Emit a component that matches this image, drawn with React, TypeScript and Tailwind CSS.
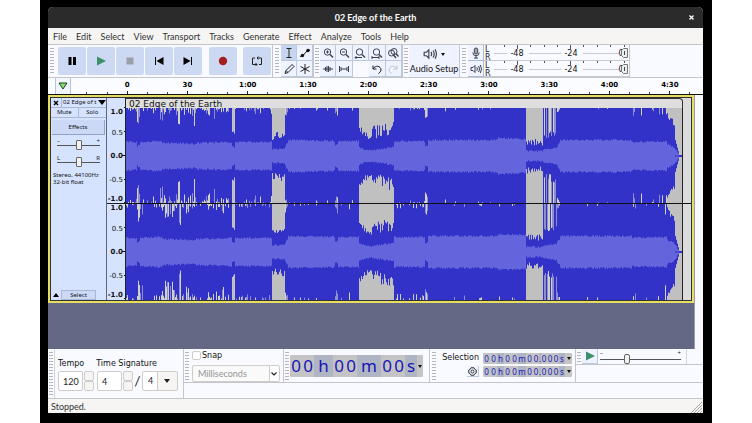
import type { ReactNode } from "react";

type Segment = {
	to: number;
	peak: [number, number];
	jitter: number;
	rms: [number, number];
	gapChance: number;
	gapDepth: number;
	wide?: boolean;
};

// Envelope of the clip. x runs along the clip, levels are in px out of 48.
const SEGMENTS: Segment[] = [
	{ to: 11, peak: [48, 48], jitter: 0, rms: [14, 14], gapChance: 0.4, gapDepth: 8 },
	{ to: 14, peak: [42, 34], jitter: 8, rms: [10, 11], gapChance: 0.8, gapDepth: 12 },
	{ to: 36, peak: [48, 48], jitter: 0, rms: [14, 15], gapChance: 0.35, gapDepth: 12 },
	{ to: 70, peak: [48, 48], jitter: 0, rms: [13, 12], gapChance: 0.75, gapDepth: 24 },
	{ to: 106, peak: [48, 48], jitter: 0, rms: [13, 14], gapChance: 0.5, gapDepth: 12 },
	{ to: 109, peak: [24, 21], jitter: 3, rms: [10, 8], gapChance: 0, gapDepth: 0, wide: true },
	{ to: 146, peak: [48, 48], jitter: 0, rms: [14, 14], gapChance: 0.35, gapDepth: 6 },
	{ to: 159, peak: [19, 22], jitter: 8, rms: [7, 7], gapChance: 0, gapDepth: 0, wide: true },
	{ to: 162, peak: [42, 46], jitter: 6, rms: [10, 15], gapChance: 0, gapDepth: 0 },
	{ to: 209, peak: [48, 48], jitter: 0, rms: [16, 15], gapChance: 0.12, gapDepth: 4 },
	{ to: 212, peak: [43, 43], jitter: 6, rms: [11, 12], gapChance: 0.4, gapDepth: 8 },
	{ to: 233, peak: [48, 48], jitter: 0, rms: [15, 15], gapChance: 0.1, gapDepth: 5 },
	{ to: 246, peak: [27, 17], jitter: 6, rms: [8, 5], gapChance: 0, gapDepth: 0, wide: true },
	{ to: 268, peak: [24, 28], jitter: 14, rms: [6, 9], gapChance: 0, gapDepth: 0, wide: true },
	{ to: 299, peak: [48, 48], jitter: 0, rms: [15, 15], gapChance: 0.3, gapDepth: 6 },
	{ to: 302, peak: [38, 40], jitter: 5, rms: [9, 11], gapChance: 0, gapDepth: 0 },
	{ to: 372, peak: [48, 48], jitter: 0, rms: [16, 16], gapChance: 0.12, gapDepth: 3 },
	{ to: 400, peak: [48, 48], jitter: 0, rms: [18, 17], gapChance: 0.05, gapDepth: 3 },
	{ to: 417, peak: [14, 14], jitter: 7, rms: [5, 5], gapChance: 0, gapDepth: 0, wide: true },
	{ to: 431, peak: [20, 24], jitter: 8, rms: [6, 8], gapChance: 0, gapDepth: 0 },
	{ to: 434, peak: [42, 46], jitter: 4, rms: [10, 14], gapChance: 0, gapDepth: 0 },
	{ to: 506, peak: [48, 48], jitter: 0, rms: [16, 16], gapChance: 0.08, gapDepth: 3 },
	{ to: 541, peak: [48, 48], jitter: 0, rms: [14, 15], gapChance: 0.15, gapDepth: 12 },
	{ to: 549, peak: [42, 30], jitter: 6, rms: [12, 8], gapChance: 0, gapDepth: 0, wide: true },
	{ to: 553, peak: [16, 1], jitter: 0, rms: [7, 1], gapChance: 0, gapDepth: 0, wide: true },
	{ to: 557, peak: [1, 1], jitter: 0, rms: [0, 0], gapChance: 0, gapDepth: 0, wide: true },
];

function makeRandom(seed: number) {
	let s = seed;
	return () => {
		s = (s * 16807) % 2147483647;
		return s / 2147483647;
	};
}

function buildChannel(mid: number, seed: number) {
	const rand = makeRandom(seed);
	const out = { wide: "", cream: "", pale: "", rms: "" };
	let from = 0;
	SEGMENTS.forEach(seg => {
		for (let x = from; x < seg.to; x++) {
			const t = (x - from) / (seg.to - from);
			const level = seg.peak[0] + (seg.peak[1] - seg.peak[0]) * t;
			const rms = seg.rms[0] + (seg.rms[1] - seg.rms[0]) * t;
			let up = level + (rand() - 0.5) * seg.jitter;
			let down = level + (rand() - 0.5) * seg.jitter;
			if (rand() < seg.gapChance) {
				const depth = rand() * rand() * seg.gapDepth + 1;
				up -= depth;
				down -= depth * 1.4;
			}
			// the broken-up passage before 3:30 reaches full scale on some columns
			if (seg.to === 431 && rand() < 0.4) {
				up = 48;
				down = 48;
			}
			const kind = seg.wide ? "wide" : rand() < 0.4 ? "pale" : "cream";
			const u = Math.max(0.5, Math.min(48, up));
			const d = Math.max(0.5, Math.min(48, down));
			if (u < 48) out[kind] += `M${x} ${mid - 48}h1V${(mid - u).toFixed(1)}h-1z`;
			if (d < 48) out[kind] += `M${x} ${mid + 48}h1V${(mid + d).toFixed(1)}h-1z`;
			if (rms > 0) {
				const r = rms + (rand() - 0.5) * 1.8;
				out.rms += `M${x} ${(mid - r).toFixed(1)}h1v${(r * 2).toFixed(1)}h-1z`;
			}
		}
		from = seg.to;
	});
	return out;
}

const CHANNELS = [buildChannel(48, 4211), buildChannel(144, 977)];

function Grip({ className = "mx-[2px]" }: { className?: string }) {
	return <div className={`w-1 my-[2px] shrink-0 self-stretch bg-[radial-gradient(circle,#b4b6bc_40%,transparent_50%)] bg-size-[2px_3px] ${className}`} />;
}

function Svg({ children, className = "w-3 h-3" }: { children: ReactNode; className?: string }) {
	return (
		<svg viewBox="0 0 12 12" className={className} fill="none" stroke="#3c4050" strokeWidth="1">
			{children}
		</svg>
	);
}

function TransportButton({ label, children, className = "" }: { label: string; children: ReactNode; className?: string }) {
	return (
		<button type="button" aria-label={label} className={`w-7 h-7 rounded-[2px] bg-[#cdd9f2] flex items-center justify-center ${className}`}>
			<Svg>{children}</Svg>
		</button>
	);
}

function ToolButton({ label, children, className = "bg-[#eef3ff]" }: { label: string; children: ReactNode; className?: string }) {
	return (
		<button type="button" aria-label={label} className={`h-4 border-r border-b border-[#bcc8de] flex items-center justify-center ${className}`}>
			<Svg>{children}</Svg>
		</button>
	);
}

const LENS = (
	<>
		<circle cx="5.5" cy="5" r="3.2" />
		<path d="M8 7.5l3 3" strokeWidth="1.4" />
	</>
);

const SPEAKER = (
	<>
		<path d="M1 4.5h2l2-2v7l-2-2H1z" />
		<path d="M6.8 4.2q1.2 1.8 0 3.6M8.6 3q2 3 0 6M10.3 2q2.4 4 0 8" />
	</>
);

const MIC = (
	<>
		<rect x="4.3" y="1" width="3.4" height="6" rx="1.7" fill="#a0a4ac" />
		<path d="M2.8 5.5q0 3.2 3.2 3.2t3.2-3.2M6 8.7v2.5M4 11h4" />
	</>
);

const METER_TICKS = [14, 27, 40, 54, 67, 80, 93, 107, 120, 134];

function Meter({ label, icon }: { label: string; icon: ReactNode }) {
	return (
		<div className="flex h-4 border-b border-[#c8cad0]">
			<button type="button" aria-label={label} className="w-4 h-4 bg-[#eef3ff] border-r border-b border-[#a9bcdc] flex items-center justify-center">
				<Svg>{icon}</Svg>
			</button>
			<div className="w-[7px] pl-px pt-px text-[8px] leading-[8px] font-['DejaVu_Sans',sans-serif] text-[#222]">
				<div>L</div>
				<div>R</div>
			</div>
			<svg viewBox="0 0 138 16" className="w-[138px] h-4 font-['DejaVu_Sans',sans-serif]" role="img" aria-label={`${label} level`}>
				<path d="M3 8.500H16M38 8.500H70M92 8.500H128" stroke="#c9cbd2" />
				{METER_TICKS.map((x, i) => (
					<path key={x} d={`M${x - 0.5} 0v${i === 1 || i === 5 ? 4 : 2}`} stroke="#555" />
				))}
				<text x="26" y="11" fontSize="8" textAnchor="middle" fill="#111">-48</text>
				<text x="80" y="11" fontSize="8" textAnchor="middle" fill="#111">-24</text>
				<text x="130" y="11" fontSize="8" textAnchor="middle" fill="#111">0</text>
				<path d="M130.500 5.500l2-2h4v9h-4l-2-2z" fill="#eee" stroke="#777" />
				<path d="M133.500 6v4" stroke="#444" />
			</svg>
		</div>
	);
}

function Toolbars() {
	return (
		<div className="flex h-[34px] bg-[#f8faff] border-y border-[#c4c6cc] overflow-hidden">
			<Grip />
			<div className="flex items-center pl-[2px] pr-px gap-x-px border-r border-[#c4c6cc]">
				<TransportButton label="Pause">
					<path d="M2.500 2h3v8h-3zM7 2h3v8H7z" fill="#000" stroke="none" />
				</TransportButton>
				<TransportButton label="Play">
					<path d="M2 1.500L11 6 2 10.500z" fill="#3f8f68" stroke="none" />
				</TransportButton>
				<TransportButton label="Stop">
					<path d="M2.500 2.500h7v7h-7z" fill="#9ba0a8" stroke="none" />
				</TransportButton>
				<TransportButton label="Skip to start">
					<path d="M2 2h1v8H2zM10.500 2v8L3.500 6z" fill="#000" stroke="none" />
				</TransportButton>
				<TransportButton label="Skip to end">
					<path d="M9 2h1v8H9zM1.500 2v8l7-4z" fill="#000" stroke="none" />
				</TransportButton>
				<TransportButton label="Record" className="ml-[6px]">
					<circle cx="6" cy="6" r="4.200" fill="#a31f1f" stroke="none" />
				</TransportButton>
				<TransportButton label="Loop" className="ml-[5px]">
					<path d="M4 3H1.500v6.500H6M8 9.500h2.500V3H6M4.500 8L6 9.500 4.500 11M7.500 1.500L6 3l1.500 1.500" stroke="#222" />
				</TransportButton>
			</div>
			<Grip />
			<div className="grid grid-cols-2 w-8">
				<ToolButton label="Selection tool" className="bg-[#c6d4f0]">
					<path d="M3.500 1.500h5M3.500 10.500h5M6 1.500v9" stroke="#222" />
				</ToolButton>
				<ToolButton label="Envelope tool">
					<path d="M1 9.500L4 8.500 8 4l3-1" stroke="#111" />
					<circle cx="3.5" cy="8.500" r="1.700" fill="#111" stroke="none" />
					<circle cx="9" cy="3.500" r="1.700" fill="#111" stroke="none" />
				</ToolButton>
				<ToolButton label="Draw tool">
					<path d="M2 10.500l1-3L9 1.500l2 2-6 6zM3 7.500l2 2" stroke="#222" />
				</ToolButton>
				<ToolButton label="Multi-tool">
					<path d="M6 1v10M1.500 3.500l9 5M10.500 3.500l-9 5" stroke="#222" />
				</ToolButton>
			</div>
			<div className="border-r border-[#c4c6cc]" />
			<Grip className="mx-px" />
			<div className="grid grid-cols-5 w-[82px]">
				<ToolButton label="Zoom in">{LENS}<path d="M4 5h3M5.500 3.500v3" /></ToolButton>
				<ToolButton label="Zoom out">{LENS}<path d="M4 5h3" /></ToolButton>
				<ToolButton label="Fit selection">{LENS}<path d="M1 10.500h7M2.500 9L1 10.500 2.500 12" /></ToolButton>
				<ToolButton label="Fit project">{LENS}<path d="M1 9v3M8 9v3M1 10.500h7" /></ToolButton>
				<ToolButton label="Zoom toggle">
					<circle cx="7" cy="4.500" r="3" />
					<circle cx="4.500" cy="6" r="3" />
					<path d="M9 6.500l2.500 3M6.500 8l2.500 3" strokeWidth="1.400" />
				</ToolButton>
				<ToolButton label="Trim audio">
					<path d="M1 6h10M3.500 4v4M5 3v6M6.500 3v6M8 4v4" />
				</ToolButton>
				<ToolButton label="Silence audio">
					<path d="M1.500 3v6M3 4v4M9 4v4M10.500 3v6M3 6h6" />
				</ToolButton>
				<div />
				<ToolButton label="Undo">
					<path d="M2 2.500v3.500h3.500M2 6C4 2 10 2.500 10 7q0 2-2.500 3.500" stroke="#222" />
				</ToolButton>
				<ToolButton label="Redo">
					<path d="M10 2.500v3.500H6.500M10 6C8 2 2 2.500 2 7q0 2 2.500 3.500" stroke="#c0c4cc" />
				</ToolButton>
			</div>
			<div className="border-r border-[#c4c6cc]" />
			<Grip className="mx-px" />
			<button type="button" className="w-[51px] flex flex-col items-center justify-center gap-y-[2px] bg-[#eef3ff] border-r border-[#bcc8de] font-['Lato',sans-serif] text-[9px] leading-3 text-[#111] whitespace-nowrap">
				<span className="flex items-center gap-x-1">
					<Svg className="w-[14px] h-[14px]">{SPEAKER}</Svg>
					<svg viewBox="0 0 4 3" className="w-1 h-[3px]"><path d="M0 0h4L2 3z" fill="#111" /></svg>
				</span>
				<span>Audio Setup</span>
			</button>
			<Grip />
			<div className="border-r border-[#c4c6cc]">
				<Meter label="Record" icon={MIC} />
				<Meter label="Playback" icon={SPEAKER} />
			</div>
		</div>
	);
}

const TIMES = ["0", "30", "1:00", "1:30", "2:00", "2:30", "3:00", "3:30", "4:00", "4:30"];

function Timeline() {
	return (
		<div className="flex h-[17px] bg-[#fbfcff] border-b border-[#111]">
			<button type="button" aria-label="Timeline options" className="ml-[7px] w-4 bg-[#f0f5ff] border-x border-[#b9c3d6] flex items-center justify-center">
				<svg viewBox="0 0 10 8" className="w-[10px] h-2">
					<path d="M1 1h8L5 7z" fill="#7fe36f" stroke="#243a24" />
				</svg>
			</button>
			<div className="w-[26px] flex pl-[15px] items-end">
				<div className="w-px h-[2px] bg-[#444]" />
			</div>
			<div className="flex-1 mr-[3px] grid grid-cols-10 font-['DejaVu_Sans',sans-serif] font-bold text-[7px] text-black">
				{TIMES.map(t => (
					<div key={t} className="flex flex-col justify-between text-center">
						<div className="h-[13px] leading-[14px]">{t}</div>
						<div className="grid grid-cols-3 items-end justify-items-center">
							<i className="w-px h-[2px] bg-[#444]" />
							<i className="w-px h-[3px] bg-[#222]" />
							<i className="w-px h-[2px] bg-[#444]" />
						</div>
					</div>
				))}
			</div>
		</div>
	);
}

function PanelSlider({ label, left, right }: { label: string; left: string; right: string }) {
	return (
		<label className="relative block h-[17px] mx-[6px] text-[6px] leading-[6px] text-[#222]">
			<span className="flex justify-between"><span>{left}</span><span>{right}</span></span>
			<input
				type="range"
				aria-label={label}
				defaultValue={50}
				className="absolute inset-x-0 top-[2px] h-[10px] w-full appearance-none bg-[linear-gradient(#555,#555)] bg-size-[100%_1px] bg-no-repeat bg-center [&::-webkit-slider-thumb]:appearance-none [&::-webkit-slider-thumb]:w-[6px] [&::-webkit-slider-thumb]:h-[10px] [&::-webkit-slider-thumb]:rounded-[1px] [&::-webkit-slider-thumb]:border [&::-webkit-slider-thumb]:border-[#666] [&::-webkit-slider-thumb]:bg-[#f2f2f2]"
			/>
		</label>
	);
}

function TrackPanel() {
	return (
		<div className="w-14 shrink-0 flex flex-col bg-[#d6e3ff] border-r border-[#5d6678] font-['Noto_Sans',sans-serif] text-[6px] leading-[9px] text-[#111]">
			<div className="flex h-[10px] border-b border-[#a9b7d2] items-center">
				<button type="button" aria-label="Close track" className="w-[11px] h-full border-r border-[#a9b7d2] flex items-center justify-center">
					<svg viewBox="0 0 6 6" className="w-[6px] h-[6px]"><path d="M1 1l4 4M5 1L1 5" stroke="#000" strokeWidth="1.400" /></svg>
				</button>
				<button type="button" className="flex-1 h-full pl-px flex items-center justify-between whitespace-nowrap">
					02 Edge of t
					<svg viewBox="0 0 8 5" className="w-2 h-[5px]"><path d="M0 0h8L4 5z" fill="#000" /></svg>
				</button>
			</div>
			<div className="grid grid-cols-2 h-[10px] border-b border-[#a9b7d2]">
				<button type="button" className="border-r border-[#a9b7d2]">Mute</button>
				<button type="button">Solo</button>
			</div>
			<button type="button" className="h-[15px] mt-[2px] mx-px border-r border-b border-[#92a2c4] bg-[#cbd9f7]">Effects</button>
			<div className="mt-[3px]">
				<PanelSlider label="Gain" left="–" right="+" />
				<PanelSlider label="Pan" left="L" right="R" />
			</div>
			<div className="pl-[2px] leading-[7px] whitespace-nowrap">
				<div>Stereo, 44100Hz</div>
				<div>32-bit float</div>
			</div>
			<div className="mt-auto flex h-[10px]">
				<button type="button" aria-label="Collapse" className="w-[11px] border-r border-[#a9b7d2] flex items-center justify-center">
					<svg viewBox="0 0 6 4" className="w-[6px] h-1"><path d="M0 4h6L3 0z" fill="#000" /></svg>
				</button>
				<button type="button" className="w-[34px] border-r border-b border-t border-[#a9b7d2] bg-[#cbd9f7] leading-[8px]">Select</button>
			</div>
		</div>
	);
}

const LEVELS = [
	{ text: "1.0", y: 6, tick: 0 },
	{ text: "0.5", y: 27, tick: 24 },
	{ text: "0.0", y: 50, tick: 48 },
	{ text: "-0.5", y: 74, tick: 72 },
	{ text: "-1.0", y: 93, tick: 95 },
];

function LevelRuler() {
	return (
		<svg viewBox="0 0 19 202" className="w-[19px] h-[202px] shrink-0 bg-[#d6e3ff] font-['DejaVu_Sans',sans-serif]">
			{[10, 106].map(top => (
				<g key={top}>
					{LEVELS.map(l => (
						<g key={l.text}>
							<text x="16" y={top + l.y} fontSize="7" textAnchor="end" fontWeight={l.text.endsWith("5") ? 400 : 700} fill="#111">
								{l.text}
							</text>
							<path d={`M${l.text === "0.0" ? 15 : 17} ${top + l.tick - 0.5}h4`} stroke="#111" />
						</g>
					))}
				</g>
			))}
			<path d="M0 105.500h19M18.500 0v202" stroke="#222" />
		</svg>
	);
}

function Clip() {
	return (
		<div className="flex-1 min-w-0 bg-[#dcdcdc]">
			<div className="h-[10px] mr-2 pl-[3px] border-t border-r border-[#333] rounded-tr-[4px] bg-[#dedede] font-['DejaVu_Sans',sans-serif] text-[9px] leading-[10px] text-[#111]">
				02 Edge of the Earth
			</div>
			<svg viewBox="0 0 565 192" preserveAspectRatio="none" className="block w-full h-[192px]" role="img" aria-label="Stereo waveform">
				<rect width="557" height="192" fill="#3232c8" />
				{CHANNELS.map((c, i) => (
					<g key={i}>
						<path d={c.wide} fill="#c0c0c0" />
						<path d={c.cream} fill="#d2d2c4" />
						<path d={c.pale} fill="#8e8ecc" />
						<path d={c.rms} fill="#6464dc" />
					</g>
				))}
				<path d="M0 95.500H565" stroke="#111" />
				<path d="M549 48H557M549 144H557" stroke="#3232c8" />
				<path d="M556.500 0v192" stroke="#222" />
			</svg>
		</div>
	);
}

function Field({ label, value, width }: { label: string; value: string; width: string }) {
	return (
		<div className="flex">
			<input
				aria-label={label}
				defaultValue={value}
				className={`${width} h-5 pl-1 rounded-[2px] border border-[#cfcdca] bg-white text-[9px] text-[#222]`}
			/>
			<div className="flex flex-col ml-px w-[10px]">
				<button type="button" aria-label={`${label} up`} className="h-[10px] rounded-[2px] border border-[#cfcdca] bg-[#f6f5f4]" />
				<button type="button" aria-label={`${label} down`} className="h-[10px] rounded-[2px] border border-[#cfcdca] bg-[#f6f5f4]" />
			</div>
		</div>
	);
}

function TempoBar() {
	return (
		<div className="flex h-[50px] border-r border-b border-[#c4c6cc]">
			<Grip className="mx-px" />
			<div className="flex flex-col border-l border-[#d4d6dc] pl-[3px] pr-[5px]">
				<div className="flex mt-2 gap-x-3 font-['DejaVu_Sans',sans-serif] text-[8px] leading-[13px] text-[#111] whitespace-nowrap">
					<span>Tempo</span>
					<span>Time Signature</span>
				</div>
				<div className="flex items-center mt-px font-['Lato',sans-serif]">
					<Field label="Tempo" value="120" width="w-[25px]" />
					<div className="w-[3px]" />
					<Field label="Upper time signature" value="4" width="w-[25px]" />
					<span className="w-[9px] text-center text-[14px] leading-5 text-[#222]">/</span>
					<div className="relative">
						<select aria-label="Lower time signature" className="block appearance-none w-9 h-5 pl-[5px] rounded-[2px] border border-[#cfcdca] bg-[linear-gradient(90deg,#fff_14px,#cfcdca_14px,#cfcdca_15px,#f6f5f4_15px)] text-[9px] text-[#222]">
							<option>4</option>
							<option>8</option>
						</select>
						<svg viewBox="0 0 6 4" className="absolute right-2 top-2 w-[6px] h-1 pointer-events-none"><path d="M0 0h6L3 4z" fill="#222" /></svg>
					</div>
				</div>
			</div>
		</div>
	);
}

function SnapBar() {
	return (
		<div className="flex h-[33px] border-r border-[#c4c6cc]">
			<Grip className="mx-px" />
			<div className="pl-[2px] pr-[3px] flex flex-col">
				<label className="flex items-center gap-x-px h-[13px] font-['DejaVu_Sans',sans-serif] text-[8px] leading-[13px] text-[#111]">
					<input type="checkbox" className="appearance-none w-[9px] h-[9px] rounded-[2px] border border-[#cfcdca] bg-white" />
					Snap
				</label>
				<div className="relative mt-[3px]">
					<select aria-label="Snap to" disabled className="block appearance-none w-[88px] h-[17px] pl-[5px] rounded-[2px] border border-[#cfcdca] bg-[linear-gradient(90deg,#fafafa_76px,#cfcdca_76px,#cfcdca_77px,#fff_77px)] font-['Lato',sans-serif] text-[9px] text-[#929595] opacity-100">
						<option>Milliseconds</option>
					</select>
					<svg viewBox="0 0 6 4" className="absolute right-[3px] top-[7px] w-[6px] h-1 pointer-events-none"><path d="M0.500 0.500L3 3 5.500 0.500" fill="none" stroke="#222" strokeWidth="1.200" /></svg>
				</div>
			</div>
		</div>
	);
}

const BIG_CELLS = [
	["0", "w-3"], ["0", "w-3"], ["h", "w-[19px]"],
	["0", "w-3"], ["0", "w-3"], ["m", "w-[24px]"],
	["0", "w-3"], ["0", "w-3"], ["s", "w-3"],
];

const SMALL_CELLS = [
	["0", "w-[7px]"], ["0", "w-[7px]"], ["h", "w-[7px]"],
	["0", "w-[7px]"], ["0", "w-[7px]"], ["m", "w-2"],
	["0", "w-[7px]"], ["0", "w-[6px]"], [".", "w-[2px]"],
	["0", "w-[6px]"], ["0", "w-[6px]"], ["0", "w-[6px]"], ["s", "w-[6px]"],
];

function TimeDisplay({ label, cells, className }: { label: string; cells: string[][]; className: string }) {
	return (
		<div role="group" aria-label={label} className={`flex rounded-[2px] bg-[#b0b5c4] overflow-hidden font-['Noto_Sans',sans-serif] text-[#1616b8] ${className}`}>
			{cells.map(([char, width], i) => (
				<span key={i} className={`${width} flex justify-center ${char === "0" ? "bg-[#c4c4c4]" : ""}`}>{char}</span>
			))}
			<button type="button" aria-label={`${label} format`} className="flex-1 flex items-center justify-center bg-[#c4c4c4]">
				<svg viewBox="0 0 4 3" className="w-1 h-[3px]"><path d="M0 0h4L2 3z" fill="#111" /></svg>
			</button>
		</div>
	);
}

function BottomBars() {
	return (
		<div className="flex items-start h-[50px] bg-[#f8faff] border-b border-[#c4c6cc] overflow-hidden">
			<TempoBar />
			<div className="flex-1 flex items-start border-b border-[#c4c6cc] h-[34px]">
				<SnapBar />
				<div className="flex h-[33px] border-r border-[#c4c6cc]">
					<Grip className="mx-px" />
					<TimeDisplay label="Time" cells={BIG_CELLS} className="w-[133px] h-[22px] mt-[6px] mr-[6px] text-[17px] leading-[22px]" />
				</div>
				<div className="flex h-[33px] border-r border-[#c4c6cc]">
					<Grip />
					<div className="w-[45px] flex flex-col items-end pr-1 font-['DejaVu_Sans',sans-serif] text-[8px] text-[#111]">
						<div className="h-[17px] leading-[17px]">Selection</div>
						<button type="button" aria-label="Selection settings" className="w-3 h-[11px] bg-[#f0f4ff] border-r border-b border-[#bcc8de] flex items-center justify-center">
							<svg viewBox="0 0 12 12" className="w-[9px] h-[9px]" fill="none" stroke="#333" strokeWidth="1.300">
								<path d="M4 1h4l1 2 2 1v4l-2 1-1 2H4L3 9 1 8V4l2-1z" />
								<circle cx="6" cy="6" r="2" />
							</svg>
						</button>
					</div>
					<div className="flex flex-col gap-y-[2px] mt-1 mr-[3px]">
						<TimeDisplay label="Selection start" cells={SMALL_CELLS} className="w-[89px] h-[11px] text-[8px] leading-[11px]" />
						<TimeDisplay label="Selection end" cells={SMALL_CELLS} className="w-[89px] h-[11px] text-[8px] leading-[11px]" />
					</div>
				</div>
				<div className="flex-1 flex h-4 border-b border-[#c4c6cc]">
					<Grip className="mx-px" />
					<button type="button" aria-label="Play at speed" className="w-4 bg-[#eef3ff] border-r border-b border-[#bcc8de] flex items-center justify-center">
						<Svg><path d="M2 1.500L11 6 2 10.500z" fill="#3f8f68" stroke="none" /></Svg>
					</button>
					<label className="relative w-[81px] ml-[2px] text-[6px] leading-[8px] text-[#222]">
						<span className="flex justify-between"><span>–</span><span>+</span></span>
						<input
							type="range"
							aria-label="Playback speed"
							defaultValue={32}
							className="absolute inset-x-0 top-[5px] h-[10px] w-full appearance-none bg-[linear-gradient(#555,#555)] bg-size-[100%_1px] bg-no-repeat bg-center [&::-webkit-slider-thumb]:appearance-none [&::-webkit-slider-thumb]:w-[6px] [&::-webkit-slider-thumb]:h-[10px] [&::-webkit-slider-thumb]:rounded-[2px] [&::-webkit-slider-thumb]:border [&::-webkit-slider-thumb]:border-[#666] [&::-webkit-slider-thumb]:bg-[#f2f2f2]"
						/>
					</label>
					<div className="ml-[5px] border-r border-[#d4d6dc]" />
				</div>
			</div>
		</div>
	);
}

const MENUS = ["File", "Edit", "Select", "View", "Transport", "Tracks", "Generate", "Effect", "Analyze", "Tools", "Help"];

export default function App() {
	return (
		<div className="min-h-screen flex bg-white px-10">
			<div className="flex-1 min-w-0 flex flex-col bg-black pl-2 pr-[9px] pt-[7px] pb-[10px]">
				<div className="flex-1 flex flex-col rounded-t-[5px] overflow-hidden bg-[#f6f5f4]">
					<header className="h-[21px] relative flex items-center justify-center bg-[#2b2b2b] text-white font-['Lato',sans-serif] font-bold text-[9px]">
						02 Edge of the Earth
						<button type="button" aria-label="Close window" className="absolute right-2 top-[7px] w-[7px] h-[7px]">
							<svg viewBox="0 0 7 7" className="w-[7px] h-[7px]"><path d="M1.500 1.500l4 4M5.500 1.500l-4 4" stroke="#fff" strokeWidth="1.300" /></svg>
						</button>
					</header>
					<nav className="h-4 flex items-center gap-x-[9px] pl-[5px] pt-px font-['Lato',sans-serif] text-[9px] leading-4 text-[#333]">
						{MENUS.map(m => (
							<button type="button" key={m}>{m}</button>
						))}
					</nav>
					<Toolbars />
					<Timeline />
					<main className="flex-1 flex">
						<div className="flex-1 min-w-0 bg-[#656885]">
							<div className="border-2 border-[#e6de62]">
								<div className="flex border border-[#333] h-[204px]">
									<TrackPanel />
									<LevelRuler />
									<Clip />
								</div>
							</div>
						</div>
						<div className="w-[9px] bg-[#f9f8fc] border-l border-[#9a9cb4]" />
					</main>
					<BottomBars />
					<footer className="h-[14px] flex justify-between items-center pl-[3px] pt-px font-['Lato',sans-serif] text-[9px] leading-[13px] text-[#333]">
						Stopped.
						<svg viewBox="0 0 12 12" className="w-3 h-3 mr-px"><path d="M1 12L12 1M4 12l8-8M7 12l5-5M10 12l2-2" stroke="#a8a6a2" /></svg>
					</footer>
				</div>
			</div>
		</div>
	);
}
